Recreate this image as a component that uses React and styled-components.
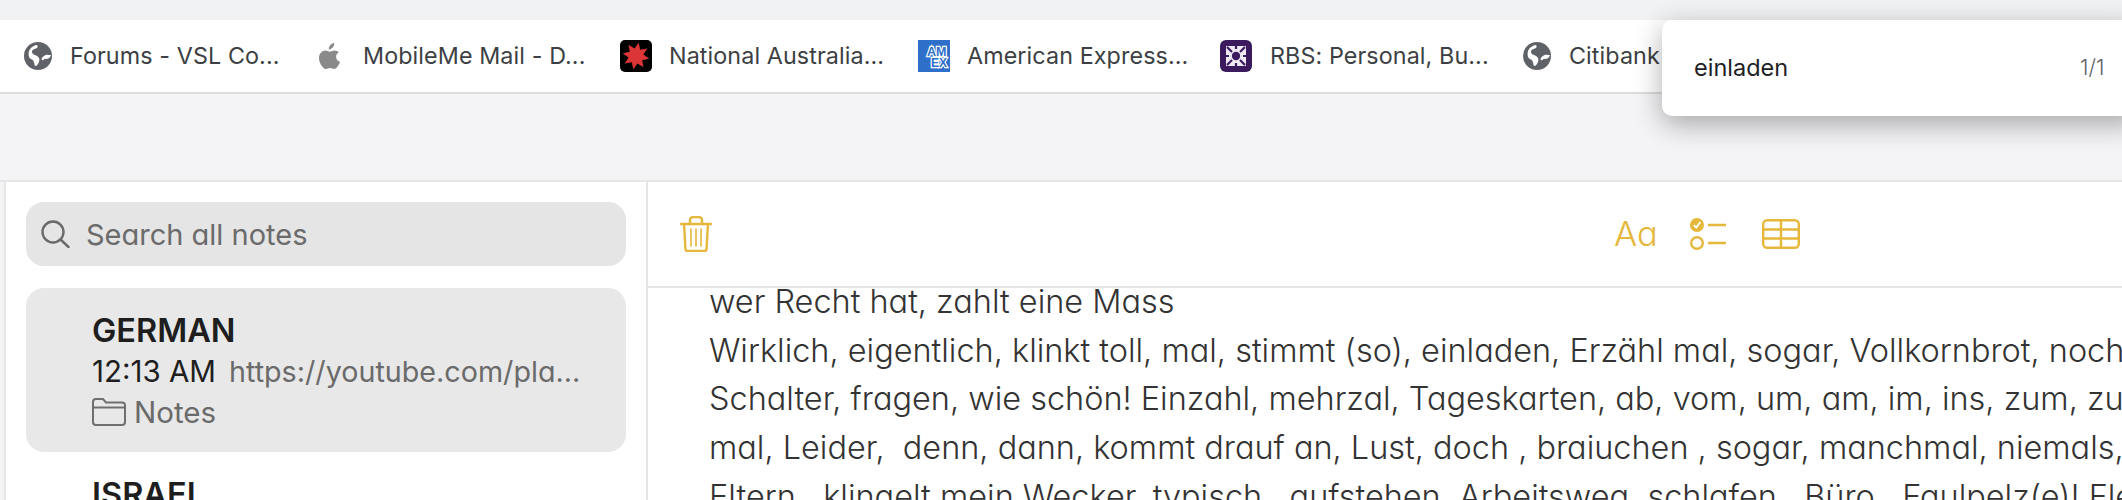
import React from 'react'
import styled, { createGlobalStyle } from 'styled-components'

const GlobalStyle = createGlobalStyle`
    html, body {
        margin: 0;
        padding: 0;
        background: #fff;
    }
`

const gold = '#e5b73b'

const Page = styled.div`
    position: relative;
    width: 2122px;
    height: 500px;
    overflow: hidden;
    display: flex;
    flex-direction: column;
    background: #f4f4f6;
    font-family: Inter, "Liberation Sans", sans-serif;
`

const TopStrip = styled.div`
    flex: none;
    height: 20px;
    background: #f1f2f4;
`

const BookmarkBar = styled.div`
    flex: none;
    display: flex;
    align-items: center;
    height: 72px;
    padding-left: 24px;
    background: #fff;
    border-bottom: 2px solid #dcdcde;
`

const Bookmark = styled.div`
    flex: none;
    display: flex;
    align-items: center;
    width: ${props => props.$width}px;
    gap: ${props => props.$gap}px;
`

const BookmarkLabel = styled.span`
    font-size: 23.3px;
    line-height: 28px;
    letter-spacing: 0.1px;
    color: #3c3f43;
    white-space: nowrap;
`

const Band = styled.div`
    flex: none;
    height: 86px;
    border-bottom: 2px solid #e6e6e6;
`

const Workspace = styled.div`
    flex: 1;
    display: flex;
    padding-left: 4px;
    font-feature-settings: 'cv11';
`

const Sidebar = styled.aside`
    flex: none;
    width: 600px;
    padding: 20px 20px 0;
    background: #fff;
    border-left: 2px solid #e6e6e6;
    border-right: 2px solid #e6e6e6;
`

const SearchBox = styled.div`
    display: flex;
    align-items: center;
    gap: 16px;
    height: 64px;
    padding-left: 15px;
    border-radius: 18px;
    background: #e5e5e5;
`

const SearchText = styled.span`
    font-size: 29px;
    color: #6b6b6b;
`

const NoteCard = styled.div`
    margin-top: 22px;
    height: 164px;
    box-sizing: border-box;
    padding: 24px 0 0 66px;
    border-radius: 18px;
    background: ${props => (props.$selected ? '#e8e8e8' : 'transparent')};
`

const NoteTitle = styled.div`
    font-size: 32.5px;
    line-height: 38px;
    font-weight: 600;
    color: #1e1e1e;
    white-space: nowrap;
`

const NoteMeta = styled.div`
    display: flex;
    align-items: baseline;
    gap: 13px;
    margin-top: 2px;
    line-height: 38px;
    white-space: nowrap;
`

const NoteTime = styled.span`
    font-size: 29.5px;
    color: #1e1e1e;
`

const NotePreview = styled.span`
    font-size: 28.7px;
    color: #6a6a6a;
`

const NoteFolder = styled.div`
    display: flex;
    align-items: center;
    gap: 8px;
    margin-top: 2px;
    font-size: 29.5px;
    line-height: 38px;
    color: #6a6a6a;
`

const NoteList = styled.div``

const NextTitle = styled(NoteTitle)`
    margin: 0 0 0 66px;
    padding-top: 24px;
`

const Main = styled.main`
    flex: 1;
    min-width: 0;
    background: #fff;
`

const Toolbar = styled.div`
    display: flex;
    align-items: center;
    height: 104px;
    padding-left: 32px;
    border-bottom: 2px solid #e6e6e6;
`

const ToolGroup = styled.div`
    display: flex;
    align-items: center;
    margin-left: 902px;
    gap: 36px;
`

const FontButton = styled.span`
    margin-right: -4px;
    font-size: 34.5px;
    line-height: 36px;
    font-weight: 300;
    color: ${gold};
`

const Body = styled.div`
    padding-left: 61px;
    margin-top: -10px;
    font-size: 32.46px;
    line-height: 48.7px;
    font-weight: 300;
    color: #333;
    white-space: pre;
`

const FindPopup = styled.div`
    position: absolute;
    top: 20px;
    left: 1662px;
    width: 480px;
    height: 96px;
    display: flex;
    align-items: center;
    box-sizing: border-box;
    padding: 0 0 2px 32px;
    background: #fff;
    border-radius: 10px;
    box-shadow: 0 8px 28px rgba(0, 0, 0, 0.32);
`

const FindText = styled.span`
    width: 386px;
    font-size: 23.5px;
    color: #202124;
`

const FindCount = styled.span`
    font-size: 21.5px;
    font-weight: 300;
    color: #5f6368;
`

const starPoints = Array.from({ length: 16 }, (_, i) => {
    const r = i % 2 === 0 ? 13.5 : 7.5
    const a = (i * Math.PI) / 8 - Math.PI / 2 + 0.2
    return `${(16 + r * Math.cos(a)).toFixed(1)},${(16 + r * Math.sin(a)).toFixed(1)}`
}).join(' ')

const Globe = () => (
    <svg width="28" height="28" viewBox="0 0 28 28">
        <circle cx="14" cy="14" r="14" fill="#5f6368" />
        <path d="M5 9c1-3 4-5 7-6 2 0 2 2 1 3-2 1-5 1-5 4 0 2 3 3 5 4s3 3 2 6c-1 2-2 4-4 4-1-3-1-6-4-7-2-1-3-4-2-8z" fill="#fff" />
        <path d="M27 13c-1 3-3 4-5 4-2-1-2 2-4 1-1-1 0-3 2-4 2-2 5-1 7-1z" fill="#fff" />
    </svg>
)

const AppleLogo = () => (
    <svg width="22" height="26" viewBox="0 0 22 26">
        <path fill="#8a8a8a" d="M15.2 0c.2 2-.6 3.500-1.500 4.600-1 1.100-2.500 1.900-3.900 1.800-.2-1.800.7-3.500 1.600-4.500C12.400.8 14 .1 15.200 0zM20 8.900c-2.500 1.600-2.900 3.300-2.900 4.900 0 2.400 1.500 4.200 3.900 5.200-.7 2-1.500 3.400-2.600 4.800-1 1.300-2 2.200-3.300 2.200-1.500 0-2.300-1-4.100-1-1.900 0-2.700 1-4.200 1-1.400 0-2.400-1.100-3.500-2.600C.9 20.800 0 17.700 0 15.200c0-4.400 2.900-7.600 6.400-7.600 1.800 0 3.100 1.100 4.300 1.100 1.100 0 2.800-1.300 4.800-1.300 1.800 0 3.400.7 4.500 2.500z" />
    </svg>
)

const NabLogo = () => (
    <svg width="32" height="32" viewBox="0 0 32 32">
        <rect width="32" height="32" rx="5" fill="#000" />
        <polygon points={starPoints} fill="#dc3535" />
    </svg>
)

const AmexLogo = () => (
    <svg width="32" height="32" viewBox="0 0 32 32" fontFamily="'Liberation Sans', sans-serif" fontWeight="700">
        <rect width="32" height="32" fill="#2e6fca" />
        <text x="9" y="16" fontSize="12.500" fill="#2e6fca" stroke="#fff" strokeWidth="2.400" paintOrder="stroke">AM</text>
        <text x="13" y="27" fontSize="12" fill="#2e6fca" stroke="#fff" strokeWidth="2.400" paintOrder="stroke">EX</text>
    </svg>
)

const RbsLogo = () => (
    <svg width="32" height="32" viewBox="0 0 32 32">
        <rect width="32" height="32" rx="6" fill="#3c1a5e" />
        <rect x="6" y="6" width="20" height="20" fill="#efeaf3" />
        <path fill="none" stroke="#3c1a5e" strokeWidth="2.200" d="M7 7l5 5M25 7l-5 5M7 25l5-5M25 25l-5-5M16 5v4M16 23v4M5 16h4M23 16h4" />
        <circle cx="16" cy="16" r="4.200" fill="#3c1a5e" />
    </svg>
)

const SearchIcon = () => (
    <svg width="29" height="28" viewBox="0 0 29 28" fill="none" stroke="#6a6a6a" strokeWidth="2.400" strokeLinecap="round">
        <circle cx="12" cy="12" r="10.500" />
        <path d="M19.500 19.500L27.500 27" />
    </svg>
)

const FolderIcon = () => (
    <svg width="34" height="28" viewBox="0 0 34 28" fill="none" stroke="#6f6f6f" strokeWidth="2">
        <path d="M1 24V4a3 3 0 0 1 3-3h7l3 3.500h16a3 3 0 0 1 3 3V24a3 3 0 0 1-3 3H4a3 3 0 0 1-3-3z" />
        <path d="M1 9.500h32" />
    </svg>
)

const TrashIcon = () => (
    <svg width="32" height="36" viewBox="0 0 32 36" fill="none" stroke={gold} strokeWidth="2.400" strokeLinecap="round">
        <path d="M1 8h30" />
        <path d="M10 8V4a3 3 0 0 1 3-3h6a3 3 0 0 1 3 3v4" />
        <path d="M4 8l1.500 25a2 2 0 0 0 2 2h17a2 2 0 0 0 2-2L28 8" />
        <path d="M11 13v17M16 13v17M21 13v17" strokeWidth="1.600" />
    </svg>
)

const ChecklistIcon = () => (
    <svg width="36" height="32" viewBox="0 0 36 32" fill="none">
        <circle cx="7" cy="7" r="7" fill={gold} />
        <path d="M3.800 7l2.400 2.600L10.400 4" stroke="#fff" strokeWidth="1.800" />
        <circle cx="7" cy="25" r="5.800" stroke={gold} strokeWidth="2.400" />
        <path d="M18 7h18M18 25h18" stroke={gold} strokeWidth="2.600" />
    </svg>
)

const TableIcon = () => (
    <svg width="38" height="30" viewBox="0 0 38 30" fill="none" stroke={gold} strokeWidth="2.400">
        <rect x="1.200" y="1.200" width="35.600" height="27.600" rx="4" />
        <path d="M19 1v28M1 10.500h36M1 19.500h36" />
    </svg>
)

const bookmarks = [
    { icon: <Globe />, label: 'Forums - VSL Co...', width: 295, gap: 18 },
    { icon: <AppleLogo />, label: 'MobileMe Mail - D...', width: 301, gap: 22 },
    { icon: <NabLogo />, label: 'National Australia...', width: 298, gap: 17 },
    { icon: <AmexLogo />, label: 'American Express...', width: 302, gap: 17 },
    { icon: <RbsLogo />, label: 'RBS: Personal, Bu...', width: 303, gap: 18 },
    { icon: <Globe />, label: 'Citibank', width: 200, gap: 18 },
]

const noteLines = [
    'wer Recht hat, zahlt eine Mass',
    'Wirklich, eigentlich, klinkt toll, mal, stimmt (so), einladen, Erzähl mal, sogar, Vollkornbrot, noch',
    'Schalter, fragen, wie schön! Einzahl, mehrzal, Tageskarten, ab, vom, um, am, im, ins, zum, zur',
    'mal, Leider,  denn, dann, kommt drauf an, Lust, doch , braiuchen , sogar, manchmal, niemals,',
    'Eltern,  klingelt mein Wecker, typisch,  aufstehen, Arbeitsweg, schlafen,  Büro,  Faulpelz(e)! Fle',
]

export default function App() {
    return (
        <Page>
            <GlobalStyle />
            <TopStrip />
            <BookmarkBar>
                {bookmarks.map(b => (
                    <Bookmark key={b.label} $width={b.width} $gap={b.gap}>
                        {b.icon}
                        <BookmarkLabel>{b.label}</BookmarkLabel>
                    </Bookmark>
                ))}
            </BookmarkBar>
            <Band />
            <Workspace>
                <Sidebar>
                    <SearchBox>
                        <SearchIcon />
                        <SearchText>Search all notes</SearchText>
                    </SearchBox>
                    <NoteList>
                        <NoteCard $selected>
                            <NoteTitle>GERMAN</NoteTitle>
                            <NoteMeta>
                                <NoteTime>12:13 AM</NoteTime>
                                <NotePreview>https://youtube.com/pla...</NotePreview>
                            </NoteMeta>
                            <NoteFolder>
                                <FolderIcon />
                                Notes
                            </NoteFolder>
                        </NoteCard>
                        <NextTitle>ISRAEL</NextTitle>
                    </NoteList>
                </Sidebar>
                <Main>
                    <Toolbar>
                        <TrashIcon />
                        <ToolGroup>
                            <FontButton>Aa</FontButton>
                            <ChecklistIcon />
                            <TableIcon />
                        </ToolGroup>
                    </Toolbar>
                    <Body>{noteLines.join('\n')}</Body>
                </Main>
            </Workspace>
            <FindPopup>
                <FindText>einladen</FindText>
                <FindCount>1/1</FindCount>
            </FindPopup>
        </Page>
    )
}
